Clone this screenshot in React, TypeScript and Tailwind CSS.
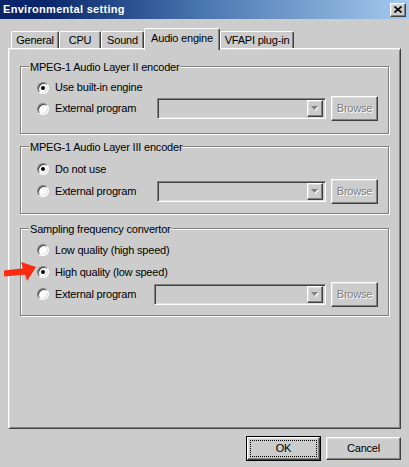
const raised =
  "border border-t-white border-l-white border-r-[#404040] border-b-[#404040] shadow-[inset_-1px_-1px_0_#808080,inset_1px_1px_0_#dfdfdf]";

function Radio({ checked = false }: { checked?: boolean }) {
  return (
    <span className="w-[12px] h-[12px] shrink-0 rounded-full bg-white border border-t-[#808080] border-l-[#808080] border-r-white border-b-white shadow-[inset_1px_1px_0_#404040,inset_-1px_-1px_0_#dfdfdf] flex items-center justify-center">
      {checked && <span className="w-[4px] h-[4px] rounded-full bg-black" />}
    </span>
  );
}

function Option({ label, checked = false, width }: { label: string; checked?: boolean; width?: string }) {
  return (
    <div className={`flex items-center gap-[6px] ${width ?? ""}`}>
      <Radio checked={checked} />
      <span>{label}</span>
    </div>
  );
}

function Combo({ width }: { width: string }) {
  return (
    <div
      className={`${width} h-[21px] flex items-center justify-end pr-[2px] bg-[#cccccc] border border-t-[#808080] border-l-[#808080] border-r-white border-b-white shadow-[inset_1px_1px_0_#404040,inset_-1px_-1px_0_#dfdfdf]`}
    >
      <div className={`w-[16px] h-[17px] flex items-center justify-center ${raised}`}>
        <svg width="8" height="5" viewBox="0 0 8 5">
          <path d="M1 1h7l-3.5 4z" fill="#ffffff" />
          <path d="M0 0h7l-3.5 4z" fill="#808080" />
        </svg>
      </div>
    </div>
  );
}

function Browse() {
  return (
    <div
      className={`ml-[5px] w-[47px] h-[25px] flex items-center justify-center text-[#808080] [text-shadow:1px_1px_0_#fff] ${raised}`}
    >
      Browse
    </div>
  );
}

function Group({ title, height, children }: { title: string; height: string; children: React.ReactNode }) {
  return (
    <div className={`relative ${height} border border-[#808080] shadow-[inset_1px_1px_0_#fff,1px_1px_0_#fff]`}>
      <span className="absolute left-[8px] -top-[6px] px-[1px] leading-[13px] bg-[#cccccc]">{title}</span>
      {children}
    </div>
  );
}

const tabs = [
  { label: "General", w: "w-[48px]" },
  { label: "CPU", w: "w-[42px]" },
  { label: "Sound", w: "w-[43px]" },
  { label: "Audio engine", w: "w-[76px]", active: true },
  { label: "VFAPI plug-in", w: "w-[74px]" },
];

export default function App() {
  return (
    <div className="relative w-[409px] h-[467px] overflow-hidden bg-[#cccccc] text-black text-[11px] tracking-[-0.2px] font-['Liberation_Sans',Arial,sans-serif]">
      {/* Title bar */}
      <div className="h-[19px] flex items-center justify-between bg-linear-to-r from-[#0a246a] from-10% via-[#4a78b0] via-50% to-[#a6caf0]">
        <span className="pl-[3px] text-white font-bold text-[11px] tracking-[0.3px]">Environmental setting</span>
        <div className={`mr-[3px] w-[16px] h-[14px] bg-[#cccccc] flex items-center justify-center ${raised}`}>
          <svg width="8" height="7" viewBox="0 0 8 7">
            <path d="M0.5 0.5l7 6M7.5 0.5l-7 6" stroke="#000" strokeWidth="1.6" />
          </svg>
        </div>
      </div>

      {/* Tabs */}
      <div className="mt-[9px] mx-[8px] h-[20px] pl-[3px] flex items-end">
        {tabs.map((t) =>
          t.active ? (
            <div
              key={t.label}
              className={`${t.w} relative z-10 -mb-[2px] h-[22px] pb-[2px] flex items-center justify-center bg-[#cccccc] rounded-t-[2px] border-l border-t border-r border-l-white border-t-white border-r-[#404040] shadow-[inset_-1px_0_0_#808080]`}
            >
              {t.label}
            </div>
          ) : (
            <div
              key={t.label}
              className={`${t.w} h-[17px] flex items-center justify-center rounded-t-[2px] border-l border-t border-r border-l-white border-t-white border-r-[#404040] shadow-[inset_-1px_0_0_#808080]`}
            >
              {t.label}
            </div>
          )
        )}
      </div>

      {/* Panel */}
      <div className="mx-[8px] h-[381px] pt-[17px] px-[11px] flex flex-col border border-t-white border-l-white border-r-[#404040] border-b-[#404040] shadow-[inset_1px_1px_0_#dfdfdf,inset_-1px_-1px_0_#808080]">
        <Group title="MPEG-1 Audio Layer II encoder" height="h-[68px]">
          <div className="pt-[10px] pl-[16px]">
            <div className="h-[21px] flex items-center">
              <Option label="Use built-in engine" checked />
            </div>
            <div className="h-[21px] flex items-center">
              <Option label="External program" width="w-[120px]" />
              <Combo width="w-[169px]" />
              <Browse />
            </div>
          </div>
        </Group>

        <div className="mt-[12px]">
          <Group title="MPEG-1 Audio Layer III encoder" height="h-[68px]">
            <div className="pt-[11px] pl-[16px]">
              <div className="h-[22px] flex items-center">
                <Option label="Do not use" checked />
              </div>
              <div className="h-[22px] flex items-center">
                <Option label="External program" width="w-[120px]" />
                <Combo width="w-[169px]" />
                <Browse />
              </div>
            </div>
          </Group>
        </div>

        <div className="mt-[14px]">
          <Group title="Sampling frequency convertor" height="h-[88px]">
            <div className="pt-[10px] pl-[16px]">
              <div className="h-[22px] flex items-center">
                <Option label="Low quality (high speed)" />
              </div>
              <div className="h-[22px] flex items-center">
                <Option label="High quality (low speed)" checked />
              </div>
              <div className="h-[22px] flex items-center">
                <Option label="External program" width="w-[117px]" />
                <Combo width="w-[172px]" />
                <Browse />
              </div>
            </div>
          </Group>
        </div>
      </div>

      {/* Footer buttons */}
      <div className="mt-[7px] pr-[8px] flex items-center justify-end gap-[5px]">
        <div className="w-[75px] h-[25px] border border-black">
          <div className={`h-full p-[2px] ${raised}`}>
            <div className="h-full flex items-center justify-center border border-dotted border-black">OK</div>
          </div>
        </div>
        <div className={`w-[75px] h-[23px] flex items-center justify-center ${raised}`}>Cancel</div>
      </div>

      {/* Red annotation arrow */}
      <svg className="absolute left-0 top-[258px]" width="40" height="26" viewBox="0 0 40 26">
        <path d="M4 12.5L26 10L26 16.5L4 18.5z" fill="#ff2a10" />
        <path d="M21 4L36 9L27 23z" fill="#ff2a10" />
      </svg>
    </div>
  );
}
